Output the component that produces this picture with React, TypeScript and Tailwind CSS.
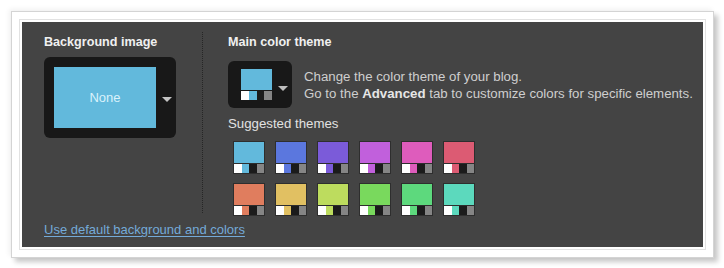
import React from 'react';

type Theme = {
	main: string;
};

const themes: Theme[] = [
	{ main: '#62b9dc' },
	{ main: '#5b77de' },
	{ main: '#7b5bd9' },
	{ main: '#c160dc' },
	{ main: '#de5cbc' },
	{ main: '#dc5b73' },
	{ main: '#e07d5e' },
	{ main: '#e1c062' },
	{ main: '#bddc5e' },
	{ main: '#79d95d' },
	{ main: '#5dd97d' },
	{ main: '#5cd9bd' },
];

const Strip = ({ accent }: { accent: string }) => (
	<div className="flex h-[9px]">
		<div className="flex-1 bg-white" />
		<div className="flex-1" style={{ backgroundColor: accent }} />
		<div className="flex-1 bg-[#1b1b1b]" />
		<div className="flex-1 bg-[#858585]" />
	</div>
);

const Arrow = ({ color }: { color: string }) => (
	<svg width="10" height="5" viewBox="0 0 10 5" className="block">
		<polygon points="0,0 10,0 5,5" fill={color} />
	</svg>
);

const Swatch = ({ theme }: { theme: Theme }) => (
	<div className="w-[32px] border border-[#2e2e2e] bg-[#2e2e2e] flex flex-col gap-[1px] cursor-pointer">
		<div className="h-[21px]" style={{ backgroundColor: theme.main }} />
		<Strip accent={theme.main} />
	</div>
);

const App = () => {
	return (
		<div className="w-[724px] h-[268px] bg-white pl-[11px] pt-[11px] font-['Liberation_Sans',Arial,sans-serif]">
			<div className="w-[703px] h-[247px] bg-white border border-[#d4d4d4] p-[7px] shadow-[4px_4px_5px_rgba(0,0,0,0.22),-2px_-2px_5px_rgba(0,0,0,0.06)]">
				<div className="h-full border border-[#e2e2e2] p-[2px]">
					<div className="h-full bg-[#444444] pl-[22px] pt-[10px] flex flex-col">
						<div className="flex">
							{/* background image */}
							<div className="w-[158px] pt-[2px]">
								<div className="text-[12.6px] leading-[16px] font-bold text-[#f0f0f0]">
									Background image
								</div>
								<div className="mt-[7px] w-[132px] h-[81px] bg-[#181818] rounded-[6px] flex items-center pl-[10px]">
									<div className="w-[102px] h-[61px] bg-[#62b9dc] flex items-center justify-center text-[13px] text-[#d9f2fb]">
										None
									</div>
									<div className="ml-[6px] mt-[3px]">
										<Arrow color="#c4c4c4" />
									</div>
								</div>
							</div>

							<div className="self-stretch mb-[3px] border-l border-dotted border-[#262626]" />

							{/* main color theme */}
							<div className="pl-[25px] pt-[2px]">
								<div className="text-[12.6px] leading-[16px] font-bold text-[#f0f0f0]">
									Main color theme
								</div>
								<div className="mt-[11px] flex items-center">
									<div className="w-[64px] h-[47px] bg-[#181818] rounded-[6px] flex items-start pl-[13px] pt-[8px]">
										<div className="w-[31px] flex flex-col gap-[1px]">
											<div className="h-[21px] bg-[#62b9dc]" />
											<Strip accent="#62b9dc" />
										</div>
										<div className="ml-[6px] mt-[17px]">
											<Arrow color="#bdbdbd" />
										</div>
									</div>
									<div className="ml-[12px] text-[13.25px] leading-[17px] text-[#cfcfcf]">
										<div>Change the color theme of your blog.</div>
										<div>
											Go to the{' '}
											<span className="font-bold text-[#e6e6e6]">
												Advanced
											</span>{' '}
											tab to customize colors for specific elements.
										</div>
									</div>
								</div>
								<div className="mt-[8px] text-[13.25px] leading-[16px] text-[#e2e2e2]">
									Suggested themes
								</div>
								<div className="mt-[9px] pl-[5px] grid grid-cols-[repeat(6,32px)] gap-x-[10px] gap-y-[9px]">
									{themes.map((t, i) => (
										<Swatch key={`theme-${i}`} theme={t} />
									))}
								</div>
							</div>
						</div>

						<a
							href="#"
							className="mt-[6px] w-fit text-[13px] leading-[16px] text-[#74aad8] underline underline-offset-[2px]"
						>
							Use default background and colors
						</a>
					</div>
				</div>
			</div>
		</div>
	);
};

export default App;
